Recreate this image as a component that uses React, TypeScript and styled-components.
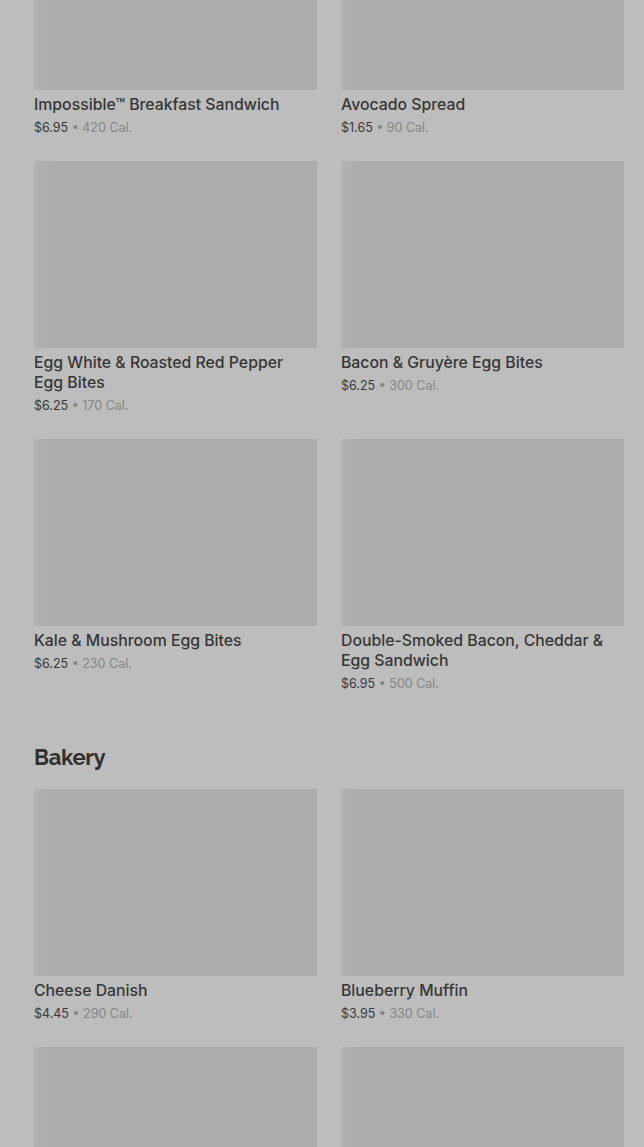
import React from 'react'
import styled, { createGlobalStyle } from 'styled-components'

const GlobalStyle = createGlobalStyle`
  html, body {
    margin: 0;
    padding: 0;
    background: #bdbdbd;
  }
  body {
    font-family: Inter, "Noto Sans", "Liberation Sans", sans-serif;
    color: #333333;
    overflow: hidden;
  }
`

const Page = styled.div`
  width: 644px;
  height: 1147px;
  overflow: hidden;
  background: #bdbdbd;
`

const Scroller = styled.div`
  margin-top: -97px;
  padding: 0 20px 0 34px;
`

const Section = styled.section`
  & + & {
    margin-top: 49px;
  }
`

const SectionTitle = styled.h2`
  margin: 0 0 18px;
  font-family: Raleway, Inter, "Liberation Sans", sans-serif;
  font-size: 22px;
  line-height: 28px;
  font-weight: 700;
  letter-spacing: -0.3px;
  color: #303030;
`

const Grid = styled.div`
  display: grid;
  grid-template-columns: 283px 283px;
  column-gap: 24px;
  row-gap: 23px;
`

const Card = styled.div`
  display: flex;
  flex-direction: column;
`

const Thumb = styled.div`
  height: 187px;
  background: linear-gradient(90deg, #b3b3b3 0, #afafaf 6px, #acacac 18px, #acacac 100%);
`

const Name = styled.div`
  margin-top: 5px;
  padding-right: 8px;
  font-size: 15.8px;
  line-height: 20px;
  font-weight: 500;
  color: #363636;
`

const Meta = styled.div`
  margin-top: 3px;
  font-size: 12.5px;
  line-height: 20px;
  color: #858585;
`

const Price = styled.span`
  color: #383838;
`

type Item = { name: string; price: string; cal: number }

const breakfast: Item[] = [
  { name: 'Impossible™ Breakfast Sandwich', price: '$6.95', cal: 420 },
  { name: 'Avocado Spread', price: '$1.65', cal: 90 },
  { name: 'Egg White & Roasted Red Pepper Egg Bites', price: '$6.25', cal: 170 },
  { name: 'Bacon & Gruyère Egg Bites', price: '$6.25', cal: 300 },
  { name: 'Kale & Mushroom Egg Bites', price: '$6.25', cal: 230 },
  { name: 'Double-Smoked Bacon, Cheddar & Egg Sandwich', price: '$6.95', cal: 500 },
]

// only the thumbnails of the third bakery row reach into the viewport
const bakery: Item[] = [
  { name: 'Cheese Danish', price: '$4.45', cal: 290 },
  { name: 'Blueberry Muffin', price: '$3.95', cal: 330 },
]

const MenuCard: React.FC<{ item: Item }> = ({ item }) => (
  <Card>
    <Thumb />
    <Name>{item.name}</Name>
    <Meta>
      <Price>{item.price}</Price> • {item.cal} Cal.
    </Meta>
  </Card>
)

export default function App() {
  return (
    <Page>
      <GlobalStyle />
      <Scroller>
        <Section>
          <Grid>
            {breakfast.map((item) => (
              <MenuCard key={item.name} item={item} />
            ))}
          </Grid>
        </Section>
        <Section>
          <SectionTitle>Bakery</SectionTitle>
          <Grid>
            {bakery.map((item) => (
              <MenuCard key={item.name} item={item} />
            ))}
            <Thumb />
            <Thumb />
          </Grid>
        </Section>
      </Scroller>
    </Page>
  )
}
